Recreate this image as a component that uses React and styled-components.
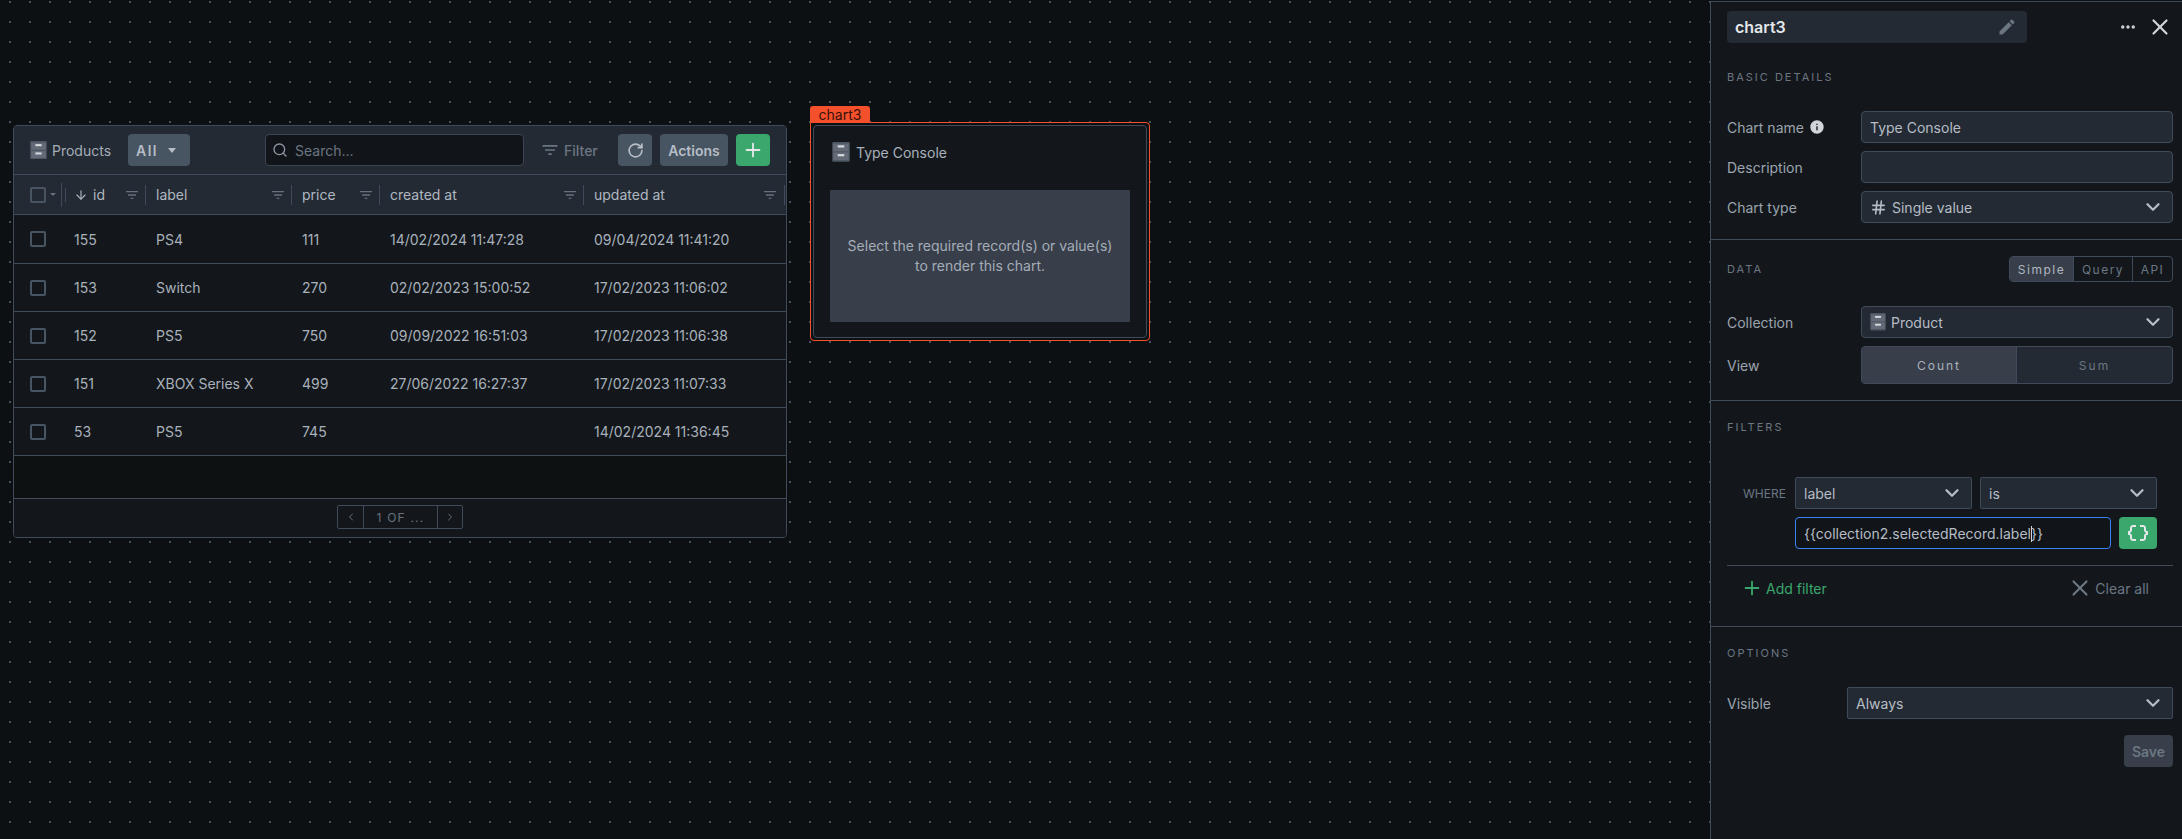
import React from "react";
import styled, { createGlobalStyle } from "styled-components";
import { ArrowDown, ChevronDown, Ellipsis, Hash, Plus, RotateCw, Search, X, ChevronLeft, ChevronRight } from "lucide-react";
import { MdDataObject, MdEdit, MdFilterList, MdInfo } from "react-icons/md";

const GlobalStyle = createGlobalStyle`
  html, body { margin: 0; padding: 0; background: #0d1012; }
  body { font-family: Inter, "Liberation Sans", sans-serif; overflow: hidden; }
  * { box-sizing: border-box; }
`;

const Page = styled.div`
  display: flex;
  width: 2182px;
  height: 839px;
`;

const Canvas = styled.div`
  flex: 1;
  display: flex;
  align-items: flex-start;
  padding: 106px 0 0 13px;
  background-color: #0d1012;
  background-image: conic-gradient(at 2px 2px, transparent 75%, #48525f 0);
  background-size: 20px 20px;
  background-position: 9px 1px;
`;

const TableCard = styled.div`
  width: 774px;
  height: 413px;
  margin-top: 19px;
  border: 1px solid #3f4b5a;
  border-radius: 4px;
  background: #0e1112;
  display: flex;
  flex-direction: column;
  overflow: hidden;
`;

const Toolbar = styled.div`
  height: 49px;
  flex: none;
  display: flex;
  align-items: center;
  padding: 0 16px;
  background: #232a33;
  border-bottom: 1px solid #3f4b5a;
`;

const ToolbarTitle = styled.div`
  display: flex;
  align-items: center;
  gap: 5px;
  font-size: 14px;
  color: #a5adb8;
  width: 98px;
`;

const ViewButton = styled.div`
  width: 62px;
  height: 32px;
  border-radius: 4px;
  background: #475462;
  color: #b6bdc6;
  font-size: 14px;
  font-weight: 600;
  letter-spacing: 1.5px;
  display: flex;
  align-items: center;
  padding-left: 8px;
  gap: 10px;
`;

const Caret = styled.span`
  width: 0;
  height: 0;
  border-left: 4.5px solid transparent;
  border-right: 4.5px solid transparent;
  border-top: 5px solid #b6bdc6;
`;

const SearchBox = styled.div`
  width: 259px;
  height: 32px;
  margin-left: 75px;
  border: 1px solid #3c4653;
  border-radius: 4px;
  background: #111519;
  display: flex;
  align-items: center;
  gap: 7px;
  padding-left: 6px;
  color: #6b7683;
  font-size: 14px;
`;

const FilterButton = styled.div`
  display: flex;
  align-items: center;
  gap: 4px;
  margin-left: 16px;
  width: 78px;
  color: #6b7683;
  font-size: 14px;
  font-weight: 500;
`;

const ToolButton = styled.div`
  height: 32px;
  width: ${props => props.width}px;
  margin-left: ${props => props.gap || 0}px;
  border-radius: 4px;
  background: ${props => (props.green ? "#3aa76d" : "#475462")};
  color: ${props => (props.green ? "#e5e7eb" : "#b6bdc6")};
  font-size: 14px;
  font-weight: 600;
  display: flex;
  align-items: center;
  justify-content: center;
`;

const Row = styled.div`
  display: grid;
  grid-template-columns: 48px 84px 146px 88px 204px 201px;
  align-items: center;
  height: ${props => (props.first ? 49 : 48)}px;
  flex: none;
  background: #13171b;
  border-bottom: 1px solid #3f4b5a;
  color: #a9b1bb;
  font-size: 14px;
`;

const HeaderRow = styled(Row)`
  height: 40px;
  background: #232a33;
  color: #b0b7c1;
`;

const HeadCell = styled.div`
  position: relative;
  height: 20px;
  display: flex;
  align-items: center;
  justify-content: space-between;
  padding: 0 ${props => props.end || 5}px 0 ${props => props.start || 10}px;
  border-right: 1px solid #3f4b5a;
  color: #b0b7c1;
`;

const IdDivider = styled.span`
  position: absolute;
  left: 3px;
  top: 3px;
  width: 1px;
  height: 14px;
  background: #3f4b5a;
`;

const HeadLabel = styled.span`
  display: flex;
  align-items: center;
  gap: 5px;
`;

const FilterGlyph = styled(MdFilterList)`
  color: #67717e;
  flex: none;
`;

const CheckCell = styled.div`
  display: flex;
  align-items: center;
  padding-left: 16px;
  gap: 4px;
`;

const Check = styled.span`
  width: 16px;
  height: 16px;
  border: 2px solid #475462;
  border-radius: 2px;
  flex: none;
`;

const TinyCaret = styled.span`
  width: 0;
  height: 0;
  border-left: 3px solid transparent;
  border-right: 3px solid transparent;
  border-top: 3px solid #67717e;
`;

const HeadCheck = styled(CheckCell)`
  height: 24px;
  border-right: 1px solid #3f4b5a;
`;

const Cell = styled.div`
  padding-left: ${props => props.start || 10}px;
`;

const TableSpace = styled.div`
  flex: 1;
`;

const TableFooter = styled.div`
  height: 39px;
  flex: none;
  display: flex;
  align-items: center;
  justify-content: center;
  padding-bottom: 2px;
  background: #13171b;
  border-top: 1px solid #3f4b5a;
`;

const Pager = styled.div`
  width: 126px;
  height: 24px;
  display: grid;
  grid-template-columns: 25px 1fr 25px;
  border: 1px solid #3f4b5a;
  border-radius: 2px;
  color: #67717e;
  font-size: 12px;
  letter-spacing: 1.2px;
  align-items: center;
  text-align: center;
`;

const PagerCell = styled.span`
  height: 100%;
  display: flex;
  align-items: center;
  justify-content: center;
  border-left: ${props => (props.divided ? "1px solid #3f4b5a" : "none")};
`;

const ChartWidget = styled.div`
  margin-left: 23px;
  width: 340px;
`;

const ChartTag = styled.div`
  width: 60px;
  height: 16px;
  background: #f4502c;
  border-radius: 3px 3px 0 0;
  color: #3a120a;
  font-size: 14px;
  line-height: 18px;
  text-align: center;
  overflow: hidden;
`;

const ChartFrame = styled.div`
  height: 219px;
  padding: 2px;
  border: 1px solid #f4502c;
  border-radius: 0 4px 4px 4px;
`;

const ChartCard = styled.div`
  height: 100%;
  padding: 0 16px;
  background: #13171b;
  border: 1px solid #3f4b5a;
  border-radius: 4px;
`;

const ChartTitle = styled.div`
  height: 52px;
  margin: 0 0 12px 2px;
  display: flex;
  align-items: center;
  gap: 6px;
  color: #a9b1bb;
  font-size: 14px;
`;

const ChartEmpty = styled.div`
  height: 132px;
  background: #383f4a;
  color: #a5adb8;
  font-size: 14px;
  line-height: 20px;
  text-align: center;
  display: flex;
  align-items: center;
  justify-content: center;
  padding: 0 10px;
`;

const Panel = styled.aside`
  width: 472px;
  flex: none;
  margin-top: 1px;
  background: #13171b;
  border-left: 1px solid #3f4b5a;
  border-top: 1px solid #3f4b5a;
  color: #9ca4af;
  font-size: 14px;
`;

const Section = styled.section`
  padding: ${props => props.top}px 9px ${props => props.bottom}px 16px;
  border-bottom: ${props => (props.last ? "none" : "1px solid #3f4b5a")};
`;

const PanelHead = styled.div`
  display: flex;
  align-items: center;
  justify-content: space-between;
`;

const NameField = styled.div`
  width: 300px;
  height: 32px;
  padding: 0 10px 0 8px;
  border-radius: 4px;
  background: #232a33;
  color: #e5e7eb;
  font-size: 16px;
  font-weight: 600;
  display: flex;
  align-items: center;
  justify-content: space-between;
`;

const HeadActions = styled.div`
  display: flex;
  align-items: center;
  gap: 10px;
  color: #d1d5db;
`;

const SectionHeader = styled.div`
  display: flex;
  align-items: center;
  justify-content: space-between;
  margin-top: ${props => props.top || 0}px;
`;

const SectionTitle = styled.div`
  font-size: 11px;
  line-height: 16px;
  letter-spacing: 2px;
  color: #6b7683;
`;

const Toggle = styled.div`
  display: flex;
  height: 26px;
  border: 1px solid #3f4b5a;
  border-radius: 4px;
  overflow: hidden;
`;

const ToggleItem = styled.div`
  width: ${props => props.width}px;
  display: flex;
  align-items: center;
  justify-content: center;
  font-size: 12px;
  letter-spacing: 1.5px;
  background: ${props => (props.active ? "#383f4a" : "transparent")};
  color: ${props => (props.active ? "#b0b7c1" : "#6b7683")};
  border-left: ${props => (props.divided ? "1px solid #3f4b5a" : "none")};
`;

const FieldRows = styled.div`
  display: flex;
  flex-direction: column;
  gap: 8px;
  margin-top: ${props => props.top}px;
`;

const FieldRow = styled.div`
  display: grid;
  grid-template-columns: ${props => props.label || 134}px 1fr;
  align-items: center;
`;

const FieldLabel = styled.label`
  display: flex;
  align-items: center;
  gap: 5px;
  color: #9ca4af;
`;

const Field = styled.div`
  flex: ${props => (props.grow ? 1 : "none")};
  height: 32px;
  display: flex;
  align-items: center;
  gap: 5px;
  padding: 0 8px;
  border: 1px solid ${props => (props.focused ? "#3b82f6" : "#3f4b5a")};
  border-radius: ${props => (props.square ? 2 : 4)}px;
  background: ${props => (props.focused ? "#111519" : "#232a33")};
  color: #b6bdc6;
`;

const FieldText = styled.span`
  flex: 1;
`;

const TextCaret = styled.span`
  display: inline-block;
  width: 1px;
  height: 16px;
  margin-right: -1px;
  vertical-align: -3px;
  background: #d1d5db;
`;

const Segmented = styled.div`
  display: grid;
  grid-template-columns: 155px 1fr;
  height: 38px;
  border: 1px solid #3f4b5a;
  border-radius: 4px;
  overflow: hidden;
  background: #232a33;
  font-size: 12px;
  letter-spacing: 2px;
`;

const Segment = styled.div`
  display: flex;
  align-items: center;
  justify-content: center;
  background: ${props => (props.active ? "#383f4a" : "transparent")};
  color: ${props => (props.active ? "#a9b1bb" : "#6b7683")};
  border-right: ${props => (props.active ? "1px solid #3f4b5a" : "none")};
`;

const WhereRows = styled.div`
  display: flex;
  flex-direction: column;
  gap: 8px;
  margin: 42px 16px 16px 16px;
`;

const WhereRow = styled.div`
  display: flex;
  align-items: center;
  gap: 8px;
  padding-left: ${props => props.indent || 0}px;
`;

const WhereLabel = styled.span`
  width: 44px;
  flex: none;
  font-size: 12px;
  color: #6b7683;
`;

const BraceButton = styled.div`
  width: 38px;
  height: 32px;
  flex: none;
  border-radius: 4px;
  background: #3aa76d;
  color: #e5e7eb;
  display: flex;
  align-items: center;
  justify-content: center;
`;

const FilterRule = styled.div`
  height: 1px;
  background: #3f4b5a;
`;

const FilterActions = styled.div`
  height: 44px;
  display: flex;
  align-items: center;
  justify-content: space-between;
  padding: 0 24px 0 14px;
`;

const AddFilter = styled.div`
  display: flex;
  align-items: center;
  gap: 3px;
  color: #3aa76d;
`;

const ClearAll = styled.div`
  display: flex;
  align-items: center;
  gap: 2px;
  color: #6b7683;
`;

const SaveRow = styled.div`
  display: flex;
  justify-content: flex-end;
  margin-top: 16px;
`;

const SaveButton = styled.div`
  width: 49px;
  height: 32px;
  border-radius: 4px;
  background: #383f4a;
  color: #6b7683;
  font-weight: 600;
  display: flex;
  align-items: center;
  justify-content: center;
`;

const Cabinet = ({ size = 17 }) => (
  <svg width={size} height={size * 1.1} viewBox="0 0 16 18" style={{ flex: "none" }}>
    <rect x="0" y="0" width="16" height="18" rx="1" fill="#4c5560" />
    <rect x="1" y="1.5" width="14" height="7" fill="#626b77" />
    <rect x="1" y="9.5" width="14" height="7" fill="#626b77" />
    <rect x="5" y="3" width="6" height="2" fill="#d5d9de" />
    <rect x="5" y="11" width="6" height="2" fill="#d5d9de" />
  </svg>
);

const Chevron = () => <ChevronDown size={22} strokeWidth={2.5} style={{ flex: "none" }} />;

const columns = [
  { label: "label" },
  { label: "price" },
  { label: "created at" },
  { label: "updated at", end: 6 }
];

const rows = [
  ["155", "PS4", "111", "14/02/2024 11:47:28", "09/04/2024 11:41:20"],
  ["153", "Switch", "270", "02/02/2023 15:00:52", "17/02/2023 11:06:02"],
  ["152", "PS5", "750", "09/09/2022 16:51:03", "17/02/2023 11:06:38"],
  ["151", "XBOX Series X", "499", "27/06/2022 16:27:37", "17/02/2023 11:07:33"],
  ["53", "PS5", "745", "", "14/02/2024 11:36:45"]
];

const App = () => (
  <Page>
    <GlobalStyle />
    <Canvas>
      <TableCard>
        <Toolbar>
          <ToolbarTitle>
            <Cabinet />
            Products
          </ToolbarTitle>
          <ViewButton>
            All
            <Caret />
          </ViewButton>
          <SearchBox>
            <Search size={16} strokeWidth={2} color="#8d96a2" />
            Search...
          </SearchBox>
          <FilterButton>
            <MdFilterList size={20} />
            Filter
          </FilterButton>
          <ToolButton width={34}>
            <RotateCw size={17} strokeWidth={2.4} />
          </ToolButton>
          <ToolButton width={68} gap={8}>
            Actions
          </ToolButton>
          <ToolButton width={34} gap={8} green>
            <Plus size={22} strokeWidth={2} />
          </ToolButton>
        </Toolbar>
        <HeaderRow>
          <HeadCheck>
            <Check />
            <TinyCaret />
          </HeadCheck>
          <HeadCell start={12}>
            <IdDivider />
            <HeadLabel>
              <ArrowDown size={14} strokeWidth={2} />
              id
            </HeadLabel>
            <FilterGlyph size={16} />
          </HeadCell>
          {columns.map(column => (
            <HeadCell key={column.label} end={column.end}>
              {column.label}
              <FilterGlyph size={16} />
            </HeadCell>
          ))}
        </HeaderRow>
        {rows.map((row, index) => (
          <Row key={row[0]} first={index === 0}>
            <CheckCell>
              <Check />
            </CheckCell>
            <Cell start={12}>{row[0]}</Cell>
            <Cell>{row[1]}</Cell>
            <Cell>{row[2]}</Cell>
            <Cell>{row[3]}</Cell>
            <Cell>{row[4]}</Cell>
          </Row>
        ))}
        <TableSpace />
        <TableFooter>
          <Pager>
            <PagerCell>
              <ChevronLeft size={12} />
            </PagerCell>
            <PagerCell divided>1 OF ...</PagerCell>
            <PagerCell divided>
              <ChevronRight size={12} />
            </PagerCell>
          </Pager>
        </TableFooter>
      </TableCard>
      <ChartWidget>
        <ChartTag>chart3</ChartTag>
        <ChartFrame>
          <ChartCard>
            <ChartTitle>
              <Cabinet size={18} />
              Type Console
            </ChartTitle>
            <ChartEmpty>Select the required record(s) or value(s) to render this chart.</ChartEmpty>
          </ChartCard>
        </ChartFrame>
      </ChartWidget>
    </Canvas>
    <Panel>
      <Section top={9} bottom={16}>
        <PanelHead>
          <NameField>
            chart3
            <MdEdit size={20} color="#6b7683" />
          </NameField>
          <HeadActions>
            <Ellipsis size={18} strokeWidth={2.6} />
            <X size={26} strokeWidth={2} />
          </HeadActions>
        </PanelHead>
        <SectionHeader top={26}>
          <SectionTitle>BASIC DETAILS</SectionTitle>
        </SectionHeader>
        <FieldRows top={26}>
          <FieldRow>
            <FieldLabel>
              Chart name
              <MdInfo size={16} color="#d1d5db" />
            </FieldLabel>
            <Field>Type Console</Field>
          </FieldRow>
          <FieldRow>
            <FieldLabel>Description</FieldLabel>
            <Field />
          </FieldRow>
          <FieldRow>
            <FieldLabel>Chart type</FieldLabel>
            <Field>
              <Hash size={17} strokeWidth={2.2} />
              <FieldText>Single value</FieldText>
              <Chevron />
            </Field>
          </FieldRow>
        </FieldRows>
      </Section>
      <Section top={16} bottom={16}>
        <SectionHeader>
          <SectionTitle>DATA</SectionTitle>
          <Toggle>
            <ToggleItem width={63} active>
              Simple
            </ToggleItem>
            <ToggleItem width={59} divided>
              Query
            </ToggleItem>
            <ToggleItem width={40} divided>
              API
            </ToggleItem>
          </Toggle>
        </SectionHeader>
        <FieldRows top={24}>
          <FieldRow>
            <FieldLabel>Collection</FieldLabel>
            <Field>
              <Cabinet size={16} />
              <FieldText>Product</FieldText>
              <Chevron />
            </Field>
          </FieldRow>
          <FieldRow>
            <FieldLabel>View</FieldLabel>
            <Segmented>
              <Segment active>Count</Segment>
              <Segment>Sum</Segment>
            </Segmented>
          </FieldRow>
        </FieldRows>
      </Section>
      <Section top={18} bottom={16}>
        <SectionTitle>FILTERS</SectionTitle>
        <WhereRows>
          <WhereRow>
            <WhereLabel>WHERE</WhereLabel>
            <Field square grow>
              <FieldText>label</FieldText>
              <Chevron />
            </Field>
            <Field square grow>
              <FieldText>is</FieldText>
              <Chevron />
            </Field>
          </WhereRow>
          <WhereRow indent={52}>
            <Field focused grow>
              <span>
                {"{{collection2.selectedRecord.label"}
                <TextCaret />
                {"}}"}
              </span>
            </Field>
            <BraceButton>
              <MdDataObject size={24} />
            </BraceButton>
          </WhereRow>
        </WhereRows>
        <FilterRule />
        <FilterActions>
          <AddFilter>
            <Plus size={22} strokeWidth={2} />
            Add filter
          </AddFilter>
          <ClearAll>
            <X size={26} strokeWidth={2} />
            Clear all
          </ClearAll>
        </FilterActions>
      </Section>
      <Section top={18} bottom={0} last>
        <SectionTitle>OPTIONS</SectionTitle>
        <FieldRows top={26}>
          <FieldRow label={120}>
            <FieldLabel>Visible</FieldLabel>
            <Field square>
              <FieldText>Always</FieldText>
              <Chevron />
            </Field>
          </FieldRow>
        </FieldRows>
        <SaveRow>
          <SaveButton>Save</SaveButton>
        </SaveRow>
      </Section>
    </Panel>
  </Page>
);

export default App;
